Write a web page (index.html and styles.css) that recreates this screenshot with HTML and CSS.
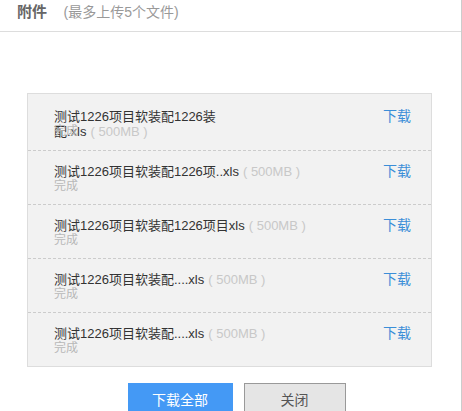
FILE: index.html
```html
<!DOCTYPE html>
<html lang="zh-CN">
<head>
  <meta charset="UTF-8">
  <title>附件</title>
  <link rel="stylesheet" href="styles.css">
</head>
<body>
<div class="dialog">
  <div class="dialog_head">
    <span class="title">附件</span>
    <span class="hint">(最多上传5个文件)</span>
  </div>
  <ul class="file_list">
    <li class="file_item">
      <div class="file_info">
        <div class="file_name">测试1226项目软装配1226装<br>配.xls<span class="file_size">( 500MB )</span></div>
        <div class="file_state">完成</div>
      </div>
      <a class="download" href="#">下载</a>
    </li>
    <li class="file_item">
      <div class="file_info">
        <div class="file_name">测试1226项目软装配1226项..xls<span class="file_size">( 500MB )</span></div>
        <div class="file_state">完成</div>
      </div>
      <a class="download" href="#">下载</a>
    </li>
    <li class="file_item">
      <div class="file_info">
        <div class="file_name">测试1226项目软装配1226项目xls<span class="file_size">( 500MB )</span></div>
        <div class="file_state">完成</div>
      </div>
      <a class="download" href="#">下载</a>
    </li>
    <li class="file_item">
      <div class="file_info">
        <div class="file_name">测试1226项目软装配....xls<span class="file_size">( 500MB )</span></div>
        <div class="file_state">完成</div>
      </div>
      <a class="download" href="#">下载</a>
    </li>
    <li class="file_item">
      <div class="file_info">
        <div class="file_name">测试1226项目软装配....xls<span class="file_size">( 500MB )</span></div>
        <div class="file_state">完成</div>
      </div>
      <a class="download" href="#">下载</a>
    </li>
  </ul>
  <div class="dialog_foot">
    <button class="btn btn_primary">下载全部</button>
    <button class="btn btn_default">关闭</button>
  </div>
</div>
</body>
</html>
```

FILE: styles.css
```css
body {
  margin: 0;
  font-family: "Liberation Sans", "Noto Sans CJK SC", sans-serif;
  background: #ffffff;
}

.dialog {
  height: 411px;
  box-sizing: border-box;
  border-right: 1px solid #cccccc;
  overflow: hidden;
}

.dialog_head {
  height: 31px;
  line-height: 24px;
  padding-left: 17px;
  border-bottom: 1px solid #dddddd;
}

.title {
  font-size: 15px;
  font-weight: bold;
  color: #666666;
}

.hint {
  margin-left: 12px;
  font-size: 14px;
  color: #999999;
}

.file_list {
  list-style: none;
  margin: 61px 29px 0 27px;
  padding: 0;
  border: 1px solid #dddddd;
  background: #f2f2f2;
}

.file_item {
  display: flex;
  justify-content: space-between;
  height: 53px;
  box-sizing: border-box;
  padding: 13px 20px 0 26px;
  border-top: 1px dashed #cccccc;
}

.file_item:first-child {
  height: 56px;
  padding-top: 15px;
  border-top: 0;
}

.file_item + .file_item {
  height: 54px;
}

.file_name {
  height: 15px;
  line-height: 15px;
  font-size: 13px;
  color: #333333;
}

.file_size {
  margin-left: 4px;
  color: #c8c8c8;
}

.file_state {
  line-height: 15px;
  font-size: 12px;
  color: #b8b8b8;
}

.download {
  line-height: 15px;
  font-size: 14px;
  color: #3b8ed8;
  text-decoration: none;
}

.dialog_foot {
  display: flex;
  justify-content: center;
  gap: 11px;
  margin-top: 16px;
  padding-left: 12px;
}

.btn {
  height: 32px;
  font-family: inherit;
  font-size: 14px;
  border-radius: 0;
  cursor: pointer;
}

.btn_primary {
  width: 105px;
  border: 0;
  background: #4499f5;
  color: #ffffff;
}

.btn_default {
  width: 102px;
  border: 1px solid #999999;
  background: #e5e5e5;
  color: #555555;
}
```
